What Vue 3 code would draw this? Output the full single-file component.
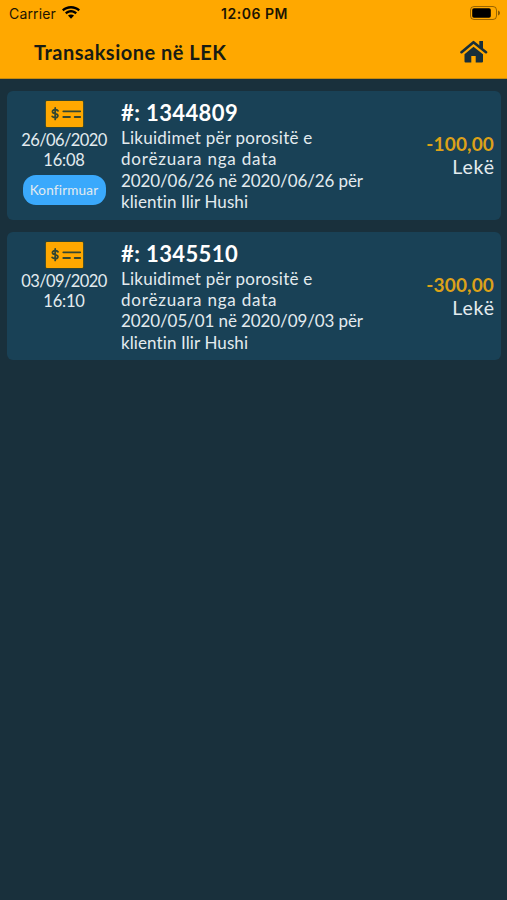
<template>
  <div class="screen">
    <!-- Header -->
    <header class="header">
      <div class="status-bar">
        <div class="carrier">
          <span>Carrier</span>
          <svg class="wifi" viewBox="0 0 18 13">
            <path d="M9 0C5.500 0 2.300 1.400 0 3.600L1.600 5.200C3.500 3.400 6.100 2.500 9 2.500S14.500 3.400 16.400 5.200L18 3.600C15.700 1.400 12.500 0 9 0Z" />
            <path d="M9 4.100C6.700 4.100 4.600 5 3 6.500L4.600 8.200C5.800 7.100 7.300 6.600 9 6.600S12.200 7.100 13.400 8.200L15 6.500C13.400 5 11.300 4.100 9 4.100Z" />
            <path d="M9 8.400C7.800 8.400 6.800 8.800 6 9.600L9 12.800L12 9.600C11.200 8.800 10.200 8.400 9 8.400Z" />
          </svg>
        </div>
        <span class="clock">12:06 PM</span>
        <svg class="battery" viewBox="0 0 30 14">
          <rect x=".5" y=".5" width="26" height="13" rx="3.500" fill="none" stroke="#000" stroke-opacity=".4" />
          <rect x="2.200" y="2.300" width="18.600" height="9.400" rx="1.800" />
          <path d="M28 4.600C29.300 5 30 5.900 30 7S29.300 9 28 9.400Z" fill-opacity=".45" />
        </svg>
      </div>
      <div class="title-bar">
        <h1 class="title">Transaksione në LEK</h1>
        <svg class="home" viewBox="0 0 28 23">
          <path d="M13.500 6.800L4.500 14.200V21.500Q4.500 22.500 5.500 22.500H11.300V16H15.700V22.500H22Q23 22.500 23 21.500V14.200Z" />
          <path d="M1.500 12.200L13.500 2.200L26 12.200" fill="none" stroke="#172f3b" stroke-width="2.600" stroke-linecap="round" stroke-linejoin="round" />
          <path d="M19.300 1H23V9.500L19.300 6.500Z" />
        </svg>
      </div>
    </header>

    <!-- Transactions -->
    <main class="list">
      <article v-for="item in transactions" :key="item.id" class="card">
        <div class="meta">
          <svg class="check-icon" viewBox="0 0 39 28">
            <rect width="39" height="28" rx="2" fill="#ffa800" />
            <path d="M13 10.800C12.200 9.900 11.200 9.600 10 9.700C8.300 9.800 7.300 10.700 7.500 12C7.900 14.200 12.800 13 12.900 15.600C13 17 11.700 17.700 10.100 17.600C8.900 17.500 7.900 17.100 7.200 16.400M10.200 8V19.400" />
            <path d="M18.300 11.300H35.200M18.300 17H25M29.700 17H35.200" />
          </svg>
          <span class="date">{{ item.date }}</span>
          <span class="date">{{ item.time }}</span>
          <span v-if="item.confirmed" class="badge">Konfirmuar</span>
        </div>
        <div class="details">
          <h2 class="number">#: {{ item.id }}</h2>
          <p v-for="line in item.lines" :key="line" class="desc">{{ line }}</p>
        </div>
        <div class="value">
          <span class="amount">{{ item.amount }}</span>
          <span class="currency">Lekë</span>
        </div>
      </article>
    </main>
  </div>
</template>

<script setup>
import { ref } from 'vue'

const transactions = ref([
  {
    id: 1344809,
    date: '26/06/2020',
    time: '16:08',
    confirmed: true,
    lines: [
      'Likuidimet për porositë e',
      'dorëzuara nga data',
      '2020/06/26 në 2020/06/26 për',
      'klientin Ilir Hushi'
    ],
    amount: '-100,00'
  },
  {
    id: 1345510,
    date: '03/09/2020',
    time: '16:10',
    confirmed: false,
    lines: [
      'Likuidimet për porositë e',
      'dorëzuara nga data',
      '2020/05/01 në 2020/09/03 për',
      'klientin Ilir Hushi'
    ],
    amount: '-300,00'
  }
])
</script>

<style>
body {
  margin: 0;
  background: #19303c;
}
</style>

<style scoped>
.screen {
  min-height: 900px;
  background: #19303c;
  font-family: Lato, "Open Sans", sans-serif;
  font-variant-ligatures: none;
}

/* Header */
.header {
  height: 79px;
  box-sizing: border-box;
  background: #ffa800;
  border-bottom: 1px solid #c58a10;
}
.status-bar {
  display: grid;
  grid-template-columns: 1fr auto 1fr;
  align-items: center;
  height: 27px;
  padding: 0 7px 0 9px;
  font-family: Inter, sans-serif;
  font-size: 14px;
  color: #1c1503;
}
.carrier {
  display: flex;
  align-items: center;
  gap: 6px;
  letter-spacing: 0.15px;
}
.wifi {
  width: 18px;
  height: 13px;
  margin-top: -2px;
}
.clock {
  font-weight: 600;
  letter-spacing: 0.5px;
}
.battery {
  width: 30px;
  height: 14px;
  margin-top: -1px;
  justify-self: end;
}
.title-bar {
  display: flex;
  justify-content: space-between;
  align-items: center;
  height: 49px;
  padding: 0 19px 0 34px;
}
.title {
  margin: 0;
  font-size: 20px;
  font-weight: 700;
  letter-spacing: 0.5px;
  color: #171c14;
}
.home {
  width: 28px;
  height: 23px;
  fill: #172f3b;
}

/* Cards */
.list {
  display: flex;
  flex-direction: column;
  gap: 12px;
  padding: 12.2px 6px 0 7px;
}
.card {
  display: grid;
  grid-template-columns: 114px 1fr auto;
  height: 128.6px;
  box-sizing: border-box;
  padding-right: 7px;
  border-radius: 6px;
  background: #194156;
  color: #e3ebef;
}
.meta {
  display: flex;
  flex-direction: column;
  align-items: center;
  padding-top: 9px;
}
.check-icon {
  width: 39px;
  height: 28px;
  margin-bottom: 2px;
  fill: none;
  stroke: #314632;
  stroke-width: 1.8;
  stroke-linecap: round;
}
.date {
  font-size: 16.5px;
  line-height: 20px;
  letter-spacing: -0.6px;
}
.date + .date {
  letter-spacing: -0.2px;
}
.badge {
  width: 83px;
  height: 30px;
  margin-top: 5px;
  border-radius: 13px;
  background: #3aa9fc;
  text-align: center;
  font-size: 13.5px;
  line-height: 30px;
  letter-spacing: 0.2px;
}
.details {
  padding-top: 8px;
}
.number {
  margin: 0;
  font-size: 22px;
  line-height: 28px;
  font-weight: 700;
  letter-spacing: 0.4px;
  color: #fff;
}
.desc {
  margin: 0;
  font-size: 17px;
  line-height: 21.3px;
  letter-spacing: 0.26px;
  white-space: nowrap;
}
.desc:nth-of-type(2) {
  letter-spacing: 0.8px;
}
.desc:nth-of-type(3) {
  letter-spacing: -0.1px;
}
.desc:nth-of-type(4) {
  letter-spacing: 0.1px;
}
.value {
  display: flex;
  flex-direction: column;
  align-items: flex-end;
  padding-top: 41px;
}
.amount {
  font-size: 19px;
  line-height: 23px;
  font-weight: 700;
  letter-spacing: 0.15px;
  color: #dda119;
}
.currency {
  font-size: 19.5px;
  line-height: 23px;
  letter-spacing: 0.8px;
  margin-right: -0.8px;
}
</style>
